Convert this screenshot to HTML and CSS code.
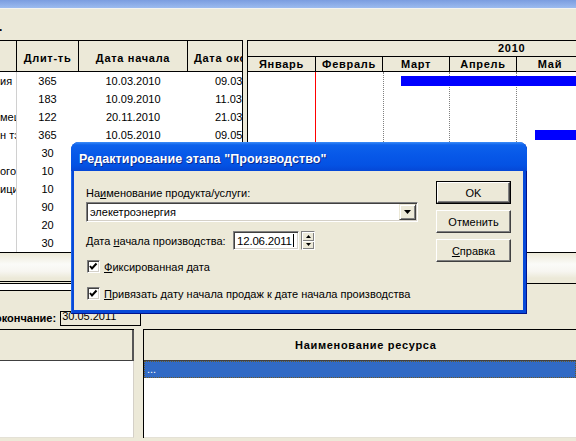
FILE: index.html
```html
<!DOCTYPE html>
<html lang="ru">
<head>
<meta charset="utf-8">
<title>Производство</title>
<link rel="stylesheet" href="styles.css">
</head>
<body>
<div class="caption"></div>
<div class="toolbar"><span class="mark">.</span></div>

<div class="views">
  <div class="table">
    <div class="thead">
      <div class="th c1"></div>
      <div class="th c2">Длит-ть</div>
      <div class="th c3">Дата начала</div>
      <div class="th c4">Дата окончания</div>
    </div>
    <div class="tbody">
      <div class="tr"><div class="td c1">ия</div><div class="td c2">365</div><div class="td c3">10.03.2010</div><div class="td c4">09.03.2011</div></div>
      <div class="tr"><div class="td c1"></div><div class="td c2">183</div><div class="td c3">10.09.2010</div><div class="td c4">11.03.2011</div></div>
      <div class="tr"><div class="td c1">меш</div><div class="td c2">122</div><div class="td c3">20.11.2010</div><div class="td c4">21.03.2011</div></div>
      <div class="tr"><div class="td c1">н тэ</div><div class="td c2">365</div><div class="td c3">10.05.2010</div><div class="td c4">09.05.2011</div></div>
      <div class="tr"><div class="td c1"></div><div class="td c2">30</div><div class="td c3"></div><div class="td c4"></div></div>
      <div class="tr"><div class="td c1">ого</div><div class="td c2">10</div><div class="td c3"></div><div class="td c4"></div></div>
      <div class="tr"><div class="td c1">ици</div><div class="td c2">10</div><div class="td c3"></div><div class="td c4"></div></div>
      <div class="tr"><div class="td c1"></div><div class="td c2">90</div><div class="td c3"></div><div class="td c4"></div></div>
      <div class="tr"><div class="td c1"></div><div class="td c2">20</div><div class="td c3"></div><div class="td c4"></div></div>
      <div class="tr"><div class="td c1"></div><div class="td c2">30</div><div class="td c3"></div><div class="td c4"></div></div>
    </div>
  </div>
  <div class="splitter"></div>
  <div class="gantt">
    <div class="year"><span class="year-text">2010</span></div>
    <div class="months">
      <div class="m first">Январь</div>
      <div class="m">Февраль</div>
      <div class="m">Март</div>
      <div class="m">Апрель</div>
      <div class="m">Май</div>
    </div>
    <div class="gbody">
      <div class="vl red" style="left:67px"></div>
      <div class="vl" style="left:135px"></div>
      <div class="vl" style="left:201px"></div>
      <div class="vl" style="left:268px"></div>
      <div class="grow"><div class="bar" style="margin-left:153px;width:200px"></div></div>
      <div class="grow"></div>
      <div class="grow"></div>
      <div class="grow"><div class="bar" style="margin-left:287px;width:100px"></div></div>
    </div>
  </div>
</div>

<div class="band"></div>
<div class="strip">
  <div class="strip-l"><div class="strip-box"></div></div>
  <div class="strip-r"></div>
</div>

<div class="info">
  <span class="end-lbl">окончание:</span>
  <span class="end-input"><span class="end-text">30.05.2011</span></span>
</div>

<div class="panels">
  <div class="pl">
    <div class="pl-head"></div>
    <div class="pl-body"></div>
  </div>
  <div class="pr">
    <div class="pr-head">Наименование ресурса</div>
    <div class="sel">...</div>
    <div class="pr-body"></div>
  </div>
</div>

<div class="dlg">
  <div class="dlg-title">Редактирование этапа "Производство"</div>
  <div class="dlg-body">
    <div class="form">
      <div class="lbl1">На<u>и</u>менование продукта/услуги:</div>
      <div class="combo">
        <span class="combo-text">элекетроэнергия</span>
        <span class="drop"><svg width="7" height="4" viewBox="0 0 7 4"><polygon points="0,0 7,0 3.5,4" fill="#000"/></svg></span>
      </div>
      <div class="date-row">
        <span class="date-lbl">Дата <u>н</u>ачала производства:</span>
        <span class="date-input">12.06.2011<span class="caret"></span></span>
        <span class="spin">
          <span class="spin-btn"><svg width="5" height="3" viewBox="0 0 5 3"><polygon points="0,3 5,3 2.5,0" fill="#000"/></svg></span>
          <span class="spin-btn"><svg width="5" height="3" viewBox="0 0 5 3"><polygon points="0,0 5,0 2.5,3" fill="#000"/></svg></span>
        </span>
      </div>
      <div class="chk chk1">
        <span class="box"><svg width="11" height="11" viewBox="0 0 11 11"><polyline points="2,5 4,7.5 8.5,2.5" fill="none" stroke="#000" stroke-width="2"/></svg></span>
        <span><u>Ф</u>иксированная дата</span>
      </div>
      <div class="chk chk2">
        <span class="box"><svg width="11" height="11" viewBox="0 0 11 11"><polyline points="2,5 4,7.5 8.5,2.5" fill="none" stroke="#000" stroke-width="2"/></svg></span>
        <span><u>П</u>ривязать дату начала продаж к дате начала производства</span>
      </div>
    </div>
    <div class="buttons">
      <div class="btn default"><span class="btn-in">OK</span></div>
      <div class="btn"><span class="btn-in">Отменить</span></div>
      <div class="btn"><span class="btn-in"><u>С</u>правка</span></div>
    </div>
  </div>
</div>
</body>
</html>
```

FILE: styles.css
```css
* { box-sizing: border-box; }
html, body { margin: 0; padding: 0; }
body {
  width: 576px;
  height: 441px;
  overflow: hidden;
  position: relative;
  background: #ece9d8;
  font-family: "Liberation Sans", Arial, sans-serif;
  font-size: 11px;
  color: #000;
}
u { text-decoration: underline; text-underline-offset: 1px; }

.caption {
  height: 9px;
  background: linear-gradient(#7b9de0, #9cbbef);
  border-bottom: 1px solid #f4f3ee;
}
.toolbar {
  height: 31px;
  position: relative;
  overflow: hidden;
}
.mark {
  display: block;
  font-weight: bold;
  font-size: 12px;
  line-height: 12px;
  margin-top: 12px;
  margin-left: -1px;
}

/* grid + gantt */
.views {
  display: flex;
  height: 213px;
  border-bottom: 1px solid #000;
}
.table {
  width: 243px;
  flex: none;
  border-top: 1px solid #000;
  border-right: 1px solid #000;
  overflow: hidden;
  background: #fff;
}
.thead {
  display: flex;
  height: 31px;
  background: #ece9d8;
  border-bottom: 1px solid #000;
}
.th {
  flex: none;
  border-right: 1px solid #000;
  display: flex;
  align-items: center;
  justify-content: center;
  padding-top: 3px;
  font-weight: bold;
  letter-spacing: 0.7px;
  white-space: nowrap;
  overflow: hidden;
}
.c1 { width: 17px; }
.c2 { width: 62px; }
.c3 { width: 109px; }
.c4 { width: 109px; }
.tr { display: flex; height: 18px; }
.td {
  flex: none;
  display: flex;
  align-items: center;
  justify-content: center;
  white-space: nowrap;
  overflow: hidden;
  border-right: 1px solid transparent;
}
.td.c1 { justify-content: flex-start; border-right-color: #d0d0d0; }

.splitter { width: 4px; flex: none; }
.gantt {
  flex: 1;
  display: flex;
  flex-direction: column;
  border-top: 1px solid #000;
  border-left: 1px solid #000;
  overflow: hidden;
  background: #fff;
}
.year {
  height: 16px;
  flex: none;
  display: flex;
  align-items: center;
  background: #ece9d8;
  border-bottom: 1px solid #000;
  overflow: hidden;
}
.year-text {
  margin-left: 250px;
  font-weight: bold;
  letter-spacing: 0.7px;
  line-height: 13px;
}
.months {
  display: flex;
  height: 15px;
  flex: none;
  background: #ece9d8;
  border-bottom: 1px solid #000;
  overflow: hidden;
}
.m {
  flex: none;
  width: 67px;
  border-right: 1px solid #000;
  text-align: center;
  font-weight: bold;
  letter-spacing: 0.7px;
  line-height: 14px;
}
.m.first { width: 68px; }
.gbody { position: relative; flex: 1; }
.vl {
  position: absolute;
  top: 0;
  bottom: 0;
  width: 0;
  border-left: 1px dotted #808080;
}
.vl.red { border-left: 1px solid #ff0000; }
.grow { height: 18px; padding-top: 4px; position: relative; }
.bar { height: 10px; background: #0000ff; }

.band {
  height: 28px;
  background: linear-gradient(#ece9d8 0%, #fbfbf8 40%, #f7f6f1 65%, #ece9d8 90%);
}
.strip { display: flex; height: 10px; }
.strip-l {
  width: 300px;
  border-top: 1px solid #000;
  padding-top: 1px;
}
.strip-box {
  height: 8px;
  background: #fff;
  border-top: 1px solid #000;
  border-bottom: 1px solid #000;
}
.strip-r { flex: 1; margin-top: 2px; border-top: 1px solid #000; }

.info {
  height: 38px;
  display: flex;
  align-items: flex-end;
  padding-bottom: 3px;
}
.end-lbl {
  font-weight: bold;
  line-height: 15px;
  margin-left: -5px;
  white-space: nowrap;
}
.end-input {
  margin-left: 4px;
  width: 81px;
  height: 15px;
  border: 1px solid #000;
  overflow: hidden;
  padding-left: 1px;
}
.end-text { display: block; line-height: 13px; margin-top: -2px; }

.panels { display: flex; height: 109px; }
.pl {
  width: 134px;
  flex: none;
  display: flex;
  flex-direction: column;
  border-top: 1px solid #000;
}
.pl-head {
  height: 31px;
  flex: none;
  border-right: 2px solid #555;
  border-bottom: 1px solid #404040;
}
.pl-body {
  flex: 1;
  background: #fff;
  border-right: 1px solid #d4d0c8;
  border-bottom: 1px solid #e4e1d6;
}
.pr {
  flex: 1;
  margin-left: 9px;
  display: flex;
  flex-direction: column;
  border-top: 1px solid #000;
  border-left: 1px solid #000;
}
.pr-head {
  height: 31px;
  flex: none;
  border-bottom: 1px solid #404040;
  padding-left: 151px;
  font-weight: bold;
  letter-spacing: 0.7px;
  line-height: 30px;
}
.sel {
  height: 17px;
  flex: none;
  background: #316ac5;
  color: #fff;
  border: 1px dotted #6b5a2a;
  padding-left: 2px;
  line-height: 14px;
}
.pr-body {
  flex: 1;
  background: #fff;
  border-bottom: 1px solid #e4e1d6;
}

/* dialog */
.dlg {
  position: absolute;
  left: 71px;
  top: 142px;
  width: 456px;
  height: 172px;
  display: flex;
  flex-direction: column;
  border-radius: 8px 8px 0 0;
  background: #0749d8;
  box-shadow: inset -1px -1px #00138c, inset 1px 0 #1f66e8;
  overflow: hidden;
}
.dlg-title {
  height: 29px;
  flex: none;
  display: flex;
  align-items: center;
  padding: 4px 0 0 8px;
  background: linear-gradient(#3d8ef9 0%, #0d62ec 10%, #0758e8 45%, #0452e3 80%, #0547d6 100%);
  color: #fff;
  font-weight: bold;
  font-size: 12.5px;
  letter-spacing: 0.1px;
  text-shadow: 1px 1px #0b2a8c;
  white-space: nowrap;
}
.dlg-body {
  flex: 1;
  margin: 0 4px 4px 3px;
  background: #ece9d8;
  display: flex;
  padding: 10px 12px 0 12px;
}
.form { width: 332px; flex: none; padding-top: 5px; }
.lbl1 { height: 14px; line-height: 14px; white-space: nowrap; }
.combo {
  margin-top: 2px;
  height: 20px;
  display: flex;
  align-items: center;
  background: #fff;
  border: 1px solid;
  border-color: #808080 #fff #fff #808080;
  box-shadow: inset 1px 1px #404040, inset -1px -1px #d4d0c8;
  padding: 1px;
}
.combo-text { flex: 1; padding-left: 2px; white-space: nowrap; }
.drop {
  width: 17px;
  height: 16px;
  flex: none;
  display: flex;
  align-items: center;
  justify-content: center;
  background: #ece9d8;
  border: 1px solid;
  border-color: #ece9d8 #404040 #404040 #ece9d8;
  box-shadow: inset 1px 1px #fff, inset -1px -1px #808080;
}
.date-row {
  margin-top: 9px;
  height: 19px;
  display: flex;
  align-items: center;
}
.date-lbl { width: 147px; flex: none; white-space: nowrap; }
.date-input {
  width: 66px;
  height: 19px;
  flex: none;
  display: flex;
  align-items: center;
  padding-left: 3px;
  background: #fff;
  border: 1px solid;
  border-color: #808080 #fff #fff #808080;
  box-shadow: inset 1px 1px #404040, inset -1px -1px #d4d0c8;
  font-size: 11.5px;
  letter-spacing: -0.2px;
}
.caret {
  width: 1px;
  height: 13px;
  background: #000;
  margin-left: 1px;
}
.spin {
  margin-left: 2px;
  width: 14px;
  height: 19px;
  display: flex;
  flex-direction: column;
  border: 1px solid;
  border-color: #808080 #fff #fff #808080;
}
.spin-btn {
  flex: 1;
  display: flex;
  align-items: center;
  justify-content: center;
  background: #ece9d8;
  box-shadow: inset 1px 1px #fff, inset -1px -1px #808080;
}
.chk { display: flex; align-items: center; height: 13px; white-space: nowrap; }
.chk1 { margin-top: 10px; }
.chk2 { margin-top: 14px; }
.box {
  width: 13px;
  height: 13px;
  flex: none;
  margin-left: 1px;
  margin-right: 4px;
  display: flex;
  align-items: center;
  justify-content: center;
  background: #fff;
  border: 1px solid;
  border-color: #808080 #fff #fff #808080;
  box-shadow: inset 1px 1px #404040, inset -1px -1px #d4d0c8;
}
.buttons {
  margin-left: 18px;
  display: flex;
  flex-direction: column;
  gap: 6px;
}
.btn {
  width: 75px;
  height: 23px;
  display: flex;
  background: #ece9d8;
}
.btn-in {
  flex: 1;
  display: flex;
  align-items: center;
  justify-content: center;
  border: 1px solid;
  border-color: #fff #404040 #404040 #fff;
  box-shadow: inset -1px -1px #808080;
}
.btn.default { border: 1px solid #000; }
```
